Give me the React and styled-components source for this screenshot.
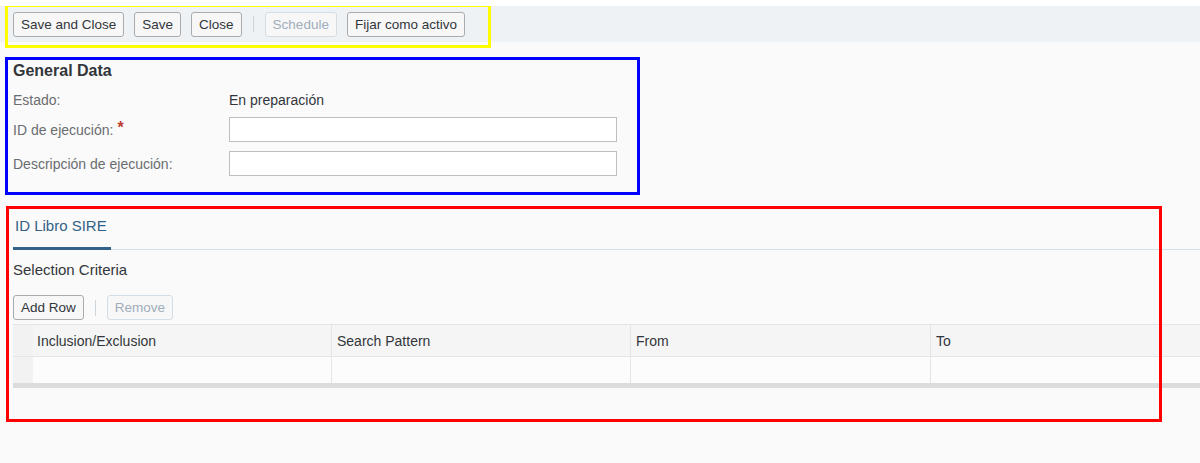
import React from 'react';
import styled, { createGlobalStyle } from 'styled-components';

const GlobalStyle = createGlobalStyle`
  html, body {
    margin: 0;
    padding: 0;
    background: #fafafa;
  }
  body {
    font-family: "Liberation Sans", Arial, sans-serif;
    color: #32363a;
  }
`;

const Page = styled.div`
  position: relative;
  width: 1200px;
  height: 463px;
  overflow: hidden;
  background: #fafafa;
  border-top: 6px solid #ffffff;
  box-sizing: border-box;
`;

const Toolbar = styled.div`
  height: 36px;
  background: #eef2f5;
  display: flex;
  align-items: center;
  gap: 10px;
  padding-left: 13px;
`;

const Button = styled.button`
  height: 25px;
  padding: 0 7px;
  font-family: inherit;
  font-size: 13.5px;
  line-height: 23px;
  border-radius: 3px;
  background: #f7f7f7;
  border: 1px solid ${p => (p.disabled ? '#d5dde4' : '#ababab')};
  color: ${p => (p.disabled ? '#9fadbb' : '#32363a')};
  cursor: ${p => (p.disabled ? 'default' : 'pointer')};
`;

const Divider = styled.span`
  width: 1px;
  height: 16px;
  margin: 0 1px;
  background: #cdd4da;
`;

const Section = styled.section`
  padding: 0 13px;
`;

const Title = styled.h2`
  margin: 20px 0 0;
  font-size: 16px;
  line-height: 18px;
  font-weight: bold;
  color: #32363a;
`;

const FormRow = styled.div`
  display: grid;
  grid-template-columns: 216px 388px;
  align-items: center;
  height: ${p => p.$h || 25}px;
  margin-top: ${p => p.$mt}px;
`;

const Label = styled.span`
  font-size: 14px;
  color: #6a6d70;
`;

const Value = styled.span`
  font-size: 14px;
  color: #32363a;
`;

const Required = styled.span`
  color: #c0392b;
  font-weight: bold;
  font-size: 16px;
  margin-left: 4px;
  position: relative;
  top: -2px;
`;

const Input = styled.input`
  box-sizing: border-box;
  width: 388px;
  height: 25px;
  border: 1px solid #bfbfbf;
  background: #ffffff;
  border-radius: 0;
  outline: none;
`;

const TabBar = styled.div`
  margin-top: 41px;
  margin-left: 13px;
  border-bottom: 1px solid #d3e0ec;
  display: flex;
`;

const Tab = styled.div`
  font-size: 15px;
  line-height: 18px;
  color: ${p => (p.$active ? '#346187' : '#32363a')};
  padding: 0 2px 12px;
  border-bottom: 3px solid ${p => (p.$active ? '#346187' : 'transparent')};
  margin-bottom: -1px;
  width: 94px;
`;

const SubTitle = styled.h3`
  margin: 11px 0 0;
  font-size: 15px;
  font-weight: normal;
  line-height: 18px;
  color: #32363a;
`;

const RowActions = styled.div`
  display: flex;
  align-items: center;
  gap: 10px;
  margin-top: 16px;
`;

const Table = styled.div`
  margin-top: 4px;
  margin-left: 13px;
`;

const TRow = styled.div`
  display: grid;
  grid-template-columns: 20px 299px 299px 300px 1fr;
  height: ${p => p.$h}px;
  border-top: 1px solid #e5e5e5;
  background: ${p => (p.$head ? '#f5f5f5' : '#fcfcfc')};
`;

const Selector = styled.div`
  background: #f2f2f2;
`;

const Cell = styled.div`
  border-right: 1px solid #e5e5e5;
  font-size: 14px;
  color: #32363a;
  display: flex;
  align-items: center;
  padding-left: ${p => (p.$first ? 4 : 5)}px;
  &:last-child { border-right: none; }
`;

const ScrollBar = styled.div`
  height: 5px;
  background: #dcdcdc;
`;

const Mark = styled.div`
  position: absolute;
  left: ${p => p.$x}px;
  top: ${p => p.$y}px;
  width: ${p => p.$w}px;
  height: ${p => p.$h}px;
  border: 3px solid ${p => p.$c};
  box-sizing: border-box;
  pointer-events: none;
`;

const columns = ['Inclusion/Exclusion', 'Search Pattern', 'From', 'To'];

export default function App() {
  return (
    <>
      <GlobalStyle />
      <Page>
        <Toolbar>
          <Button>Save and Close</Button>
          <Button>Save</Button>
          <Button>Close</Button>
          <Divider />
          <Button disabled>Schedule</Button>
          <Button>Fijar como activo</Button>
        </Toolbar>

        <Section>
          <Title>General Data</Title>
          <FormRow $mt={9} $h={22}>
            <Label>Estado:</Label>
            <Value>En preparación</Value>
          </FormRow>
          <FormRow $mt={6}>
            <Label>ID de ejecución:<Required>*</Required></Label>
            <Input />
          </FormRow>
          <FormRow $mt={9}>
            <Label>Descripción de ejecución:</Label>
            <Input />
          </FormRow>
        </Section>

        <TabBar>
          <Tab $active>ID Libro SIRE</Tab>
        </TabBar>

        <Section>
          <SubTitle>Selection Criteria</SubTitle>
          <RowActions>
            <Button>Add Row</Button>
            <Divider />
            <Button disabled>Remove</Button>
          </RowActions>
        </Section>

        <Table>
          <TRow $head $h={31}>
            <Selector />
            {columns.map((c, i) => <Cell key={c} $first={i === 0}>{c}</Cell>)}
          </TRow>
          <TRow $h={26}>
            <Selector />
            {columns.map((c, i) => <Cell key={c} $first={i === 0} />)}
          </TRow>
          <ScrollBar />
        </Table>

        <Mark $x={5} $y={-2} $w={486} $h={44} $c="#ffff00" />
        <Mark $x={5} $y={51} $w={635} $h={138} $c="#0000ff" />
        <Mark $x={6} $y={200} $w={1156} $h={216} $c="#ff0000" />
      </Page>
    </>
  );
}
